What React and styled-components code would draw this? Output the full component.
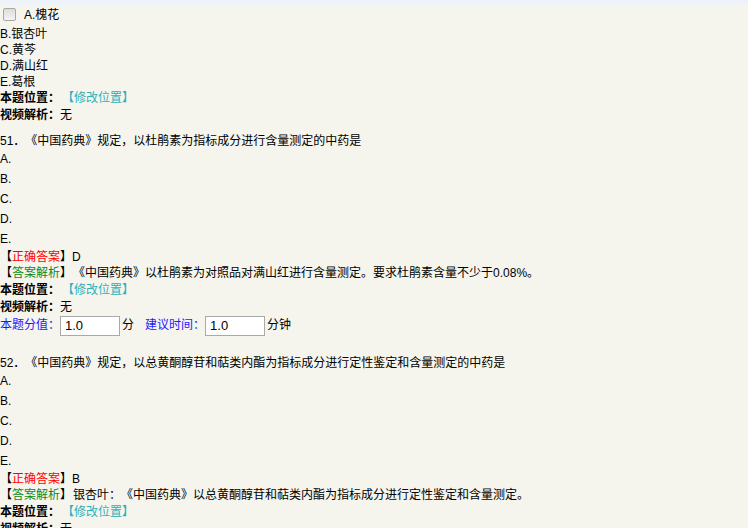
import React from "react";
import styled, { createGlobalStyle } from "styled-components";

const Global = createGlobalStyle`
  html, body { margin: 0; padding: 0; background: #f5f5ee; }
  body {
    font-family: "Liberation Sans", "Noto Sans CJK SC", sans-serif;
    font-size: 12px;
    color: #000;
    text-spacing-trim: space-all;
  }
`;

const TopStrip = styled.div`
  height: 5px;
  background: #eef3f9;
`;

const Page = styled.div`
  display: flex;
  flex-direction: column;
`;

const Block = styled.section`
  display: flex;
  flex-direction: column;
  margin-top: ${(p) => p.$gap || 0}px;
`;

const Line = styled.div`
  height: ${(p) => p.$h || 16}px;
  line-height: ${(p) => p.$h || 16}px;
  white-space: nowrap;
  display: flex;
  align-items: center;
`;

const CheckRow = styled(Line)`
  padding-left: 3px;
`;

const Check = styled.span`
  display: inline-block;
  width: 11px;
  height: 11px;
  border: 1px solid #a7a7a7;
  border-radius: 2px;
  background: linear-gradient(#dcdcdc, #f4f4f4);
  margin-right: 8px;
  margin-top: -3px;
`;

const Label = styled.b`
  font-weight: bold;
`;

const EditLink = styled.span`
  color: #2fb0b8;
  margin-left: 2px;
`;

const Tag = styled.span`
  color: ${(p) => p.$color};
`;

const Blue = styled.span`
  color: #1a1aff;
`;

const ScoreRow = styled(Line)`
  margin-bottom: 11px;
`;

const Field = styled.input`
  width: 60px;
  height: 20px;
  box-sizing: border-box;
  border: 1px solid #a9a9a9;
  background: #fff;
  padding: 0 4px;
  font-family: "Liberation Sans", sans-serif;
  font-size: 13px;
  color: #000;
  margin: 0 2px 0 0;
  outline: none;
`;

const Spacer = styled.span`
  display: inline-block;
  width: ${(p) => p.$w}px;
`;

const questions = [
  {
    title: "51．《中国药典》规定，以杜鹃素为指标成分进行含量测定的中药是",
    answer: "D",
    analysis: "《中国药典》以杜鹃素为对照品对满山红进行含量测定。要求杜鹃素含量不少于0.08%。",
    gap: 9,
  },
  {
    title: "52．《中国药典》规定，以总黄酮醇苷和萜类内酯为指标成分进行定性鉴定和含量测定的中药是",
    answer: "B",
    analysis: "银杏叶：《中国药典》以总黄酮醇苷和萜类内酯为指标成分进行定性鉴定和含量测定。",
    gap: 8,
  },
];

const Question = ({ q }) => (
  <Block $gap={q.gap}>
    <Line $h={16}>{q.title}</Line>
    {["A.", "B.", "C.", "D.", "E."].map((o) => (
      <Line key={o} $h={20}>{o}</Line>
    ))}
    <Line $h={16}>
      【<Tag $color="#ff0000">正确答案</Tag>】{q.answer}
    </Line>
    <Line $h={17}>
      【<Tag $color="#0b8a1a">答案解析</Tag>】<Spacer $w={1} />{q.analysis}
    </Line>
    <Line $h={17}>
      <Label>本题位置：</Label>
      <EditLink>【修改位置】</EditLink>
    </Line>
    <Line $h={16}>
      <Label>视频解析：</Label>无
    </Line>
    <ScoreRow $h={21}>
      <Blue>本题分值：</Blue>
      <Field defaultValue="1.0" />分
      <Spacer $w={11} />
      <Blue>建议时间：</Blue>
      <Field defaultValue="1.0" />分钟
    </ScoreRow>
  </Block>
);

export default function App() {
  return (
    <Page>
      <Global />
      <TopStrip />
      <Block>
        <CheckRow $h={21}>
          <Check />A.槐花
        </CheckRow>
        <Line>B.银杏叶</Line>
        <Line>C.黄芩</Line>
        <Line>D.满山红</Line>
        <Line>E.葛根</Line>
        <Line $h={17}>
          <Label>本题位置：</Label>
          <EditLink>【修改位置】</EditLink>
        </Line>
        <Line $h={17}>
          <Label>视频解析：</Label>无
        </Line>
      </Block>
      {questions.map((q) => (
        <Question key={q.title} q={q} />
      ))}
    </Page>
  );
}
